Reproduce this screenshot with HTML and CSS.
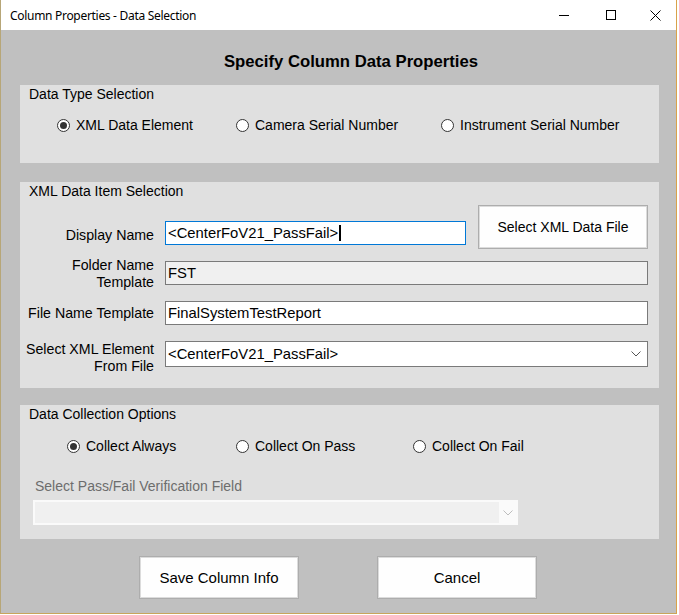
FILE: index.html
```html
<!DOCTYPE html>
<html>
<head>
<meta charset="utf-8">
<title>Column Properties - Data Selection</title>
<link rel="stylesheet" href="styles.css">
</head>
<body>
<div class="window">
  <div class="titlebar">
    <span class="title">Column Properties - Data Selection</span>
    <div class="controls">
      <span class="ctl ctl-min"><svg width="10" height="10" viewBox="0 0 10 10"><line x1="0" y1="5.5" x2="10" y2="5.5" stroke="#000" stroke-width="1"/></svg></span>
      <span class="ctl ctl-max"><svg width="10" height="10" viewBox="0 0 10 10"><rect x="0.5" y="0.5" width="9" height="9" fill="none" stroke="#000" stroke-width="1"/></svg></span>
      <span class="ctl ctl-close"><svg width="11" height="11" viewBox="0 0 11 11"><path d="M0.5 0.5 L10.5 10.5 M10.5 0.5 L0.5 10.5" stroke="#000" stroke-width="1"/></svg></span>
    </div>
  </div>
  <div class="client">
    <h1 class="heading">Specify Column Data Properties</h1>

    <section class="group group-type">
      <div class="legend">Data Type Selection</div>
      <div class="radios radios-type">
        <div class="radio w-xml"><span class="dot checked"></span>XML Data Element</div>
        <div class="radio w-camera"><span class="dot"></span>Camera Serial Number</div>
        <div class="radio"><span class="dot"></span>Instrument Serial Number</div>
      </div>
    </section>

    <section class="group group-xml">
      <div class="legend">XML Data Item Selection</div>
      <div class="row row-display">
        <div class="label label-display">Display Name</div>
        <div class="ctl-cell">
          <div class="textbox focused tb-display">&lt;CenterFoV21_PassFail&gt;<span class="caret"></span></div>
          <div class="button btn-select">Select XML Data File</div>
        </div>
      </div>
      <div class="row row-folder">
        <div class="label">Folder Name<br>Template</div>
        <div class="textbox readonly tb-folder">FST</div>
      </div>
      <div class="row row-file">
        <div class="label">File Name Template</div>
        <div class="textbox">FinalSystemTestReport</div>
      </div>
      <div class="row row-element">
        <div class="label">Select XML Element<br>From File</div>
        <div class="combo">
          <span class="combo-text">&lt;CenterFoV21_PassFail&gt;</span>
          <svg class="chev" width="10" height="6" viewBox="0 0 10 6"><polyline points="0.5,0.5 5,5 9.5,0.5" fill="none" stroke="#555" stroke-width="1"/></svg>
        </div>
      </div>
    </section>

    <section class="group group-collect">
      <div class="legend">Data Collection Options</div>
      <div class="radios radios-collect">
        <div class="radio w-always"><span class="dot checked"></span>Collect Always</div>
        <div class="radio w-pass"><span class="dot"></span>Collect On Pass</div>
        <div class="radio"><span class="dot"></span>Collect On Fail</div>
      </div>
      <div class="disabled-label">Select Pass/Fail Verification Field</div>
      <div class="combo disabled">
        <span class="combo-fill"></span>
        <span class="combo-btn"><svg width="10" height="6" viewBox="0 0 10 6"><polyline points="0.5,0.5 5,5 9.5,0.5" fill="none" stroke="#bdbdbd" stroke-width="1"/></svg></span>
      </div>
    </section>

    <div class="actions">
      <div class="button btn-action">Save Column Info</div>
      <div class="button btn-action">Cancel</div>
    </div>
  </div>
</div>
</body>
</html>
```

FILE: styles.css
```css
* { box-sizing: border-box; }

html, body {
  margin: 0;
  padding: 0;
  background: #ffffff;
}

body {
  font-family: "Liberation Sans", Arial, sans-serif;
  font-size: 14px;
  color: #000;
}

.window {
  width: 677px;
  height: 614px;
  border-left: 1px solid #b7a677;
  border-right: 1px solid #d9a24a;
  border-bottom: 1px solid #c9a55c;
  display: flex;
  flex-direction: column;
  background: #c0c0c0;
}

.titlebar {
  height: 30px;
  background: #ffffff;
  display: flex;
  align-items: center;
  flex: none;
}

.title {
  font-family: "Noto Sans", "Open Sans", sans-serif;
  font-size: 12px;
  letter-spacing: -0.3px;
  padding-left: 9px;
  color: #000;
  flex: 1;
}

.controls {
  display: flex;
  height: 30px;
}

.ctl {
  height: 30px;
  display: flex;
  align-items: center;
  justify-content: center;
}

.ctl-min { width: 46px; }
.ctl-max { width: 47px; }
.ctl-close { width: 42px; }

.ctl svg { display: block; }

.client {
  flex: 1;
  display: flex;
  flex-direction: column;
  background: #c0c0c0;
}

.heading {
  margin: 22px 0 0 0;
  padding-left: 25px;
  font-size: 16.7px;
  line-height: 20px;
  font-weight: bold;
  text-align: center;
}

.group {
  margin-left: 19px;
  width: 639px;
  background: #e0e0e0;
  padding-top: 1px;
  flex: none;
}

.group-type {
  margin-top: 13px;
  height: 78px;
}

.group-xml {
  margin-top: 19px;
  height: 206px;
}

.group-collect {
  margin-top: 17px;
  height: 134px;
}

.legend {
  padding-left: 9px;
  line-height: 16px;
  height: 16px;
}

.radios {
  display: flex;
  line-height: 16px;
  height: 16px;
}

.radios-type {
  margin-top: 15px;
  padding-left: 37px;
}

.radios-collect {
  margin-top: 16px;
  padding-left: 47px;
}

.radio {
  display: flex;
  align-items: center;
  white-space: nowrap;
}

.w-xml { width: 179px; }
.w-camera { width: 205px; }
.w-always { width: 169px; }
.w-pass { width: 177px; }

.dot {
  width: 13px;
  height: 13px;
  border: 1px solid #333;
  border-radius: 50%;
  background: #fff;
  margin-right: 6px;
  display: flex;
  align-items: center;
  justify-content: center;
  flex: none;
}

.dot.checked::after {
  content: "";
  width: 7px;
  height: 7px;
  border-radius: 50%;
  background: #333;
}

.row {
  display: grid;
  grid-template-columns: 134px 483px;
  column-gap: 11px;
}

.label {
  text-align: right;
  line-height: 17px;
  font-size: 14.2px;
}

.row-display {
  margin-top: 6px;
  height: 44px;
}

.label-display {
  padding-top: 22px;
  line-height: 16px;
}

.ctl-cell {
  display: flex;
  align-items: flex-start;
}

.textbox {
  height: 24px;
  border: 1px solid #7a7a7a;
  background: #fff;
  padding-left: 2px;
  line-height: 22px;
  font-size: 14.8px;
  white-space: nowrap;
  display: flex;
  align-items: center;
}

.textbox.focused {
  border-color: #0078d7;
}

.textbox.readonly {
  background: #f0f0f0;
}

.tb-display {
  width: 301px;
  margin-top: 16px;
}

.caret {
  display: inline-block;
  width: 2px;
  height: 16px;
  background: #000;
  margin-left: 1px;
}

.button {
  background: #fefefe;
  border: 1px solid #adadad;
  box-shadow: inset 0 0 0 1px #dcdcdc;
  display: flex;
  align-items: center;
  justify-content: center;
  white-space: nowrap;
}

.btn-select {
  width: 170px;
  height: 44px;
  margin-left: auto;
}

.row-folder {
  margin-top: 8px;
  height: 34px;
}

.tb-folder {
  margin-top: 4px;
}

.row-file {
  margin-top: 10px;
  height: 24px;
  align-items: center;
}

.row-file .label {
  line-height: 16px;
}

.row-element {
  margin-top: 16px;
  height: 34px;
}

.combo {
  height: 26px;
  border: 1px solid #7a7a7a;
  background: #fff;
  display: flex;
  align-items: center;
  padding-left: 2px;
  padding-right: 6px;
  font-size: 14.8px;
}

.combo-text {
  flex: 1;
  white-space: nowrap;
}

.chev { display: block; }

.disabled-label {
  margin-top: 24px;
  padding-left: 15px;
  line-height: 16px;
  color: #6d6d6d;
}

.combo.disabled {
  margin-top: 6px;
  margin-left: 13px;
  width: 485px;
  height: 25px;
  border: 2px solid #fafafa;
  background: #f0f0f0;
  padding: 0;
}

.combo-fill {
  flex: 1;
  height: 100%;
}

.combo-btn {
  width: 17px;
  height: 100%;
  background: #fafafa;
  display: flex;
  align-items: center;
  justify-content: center;
}

.actions {
  margin-top: 17px;
  padding-left: 138px;
  display: flex;
  gap: 78px;
}

.btn-action {
  width: 160px;
  height: 43px;
  font-size: 15px;
}
```
